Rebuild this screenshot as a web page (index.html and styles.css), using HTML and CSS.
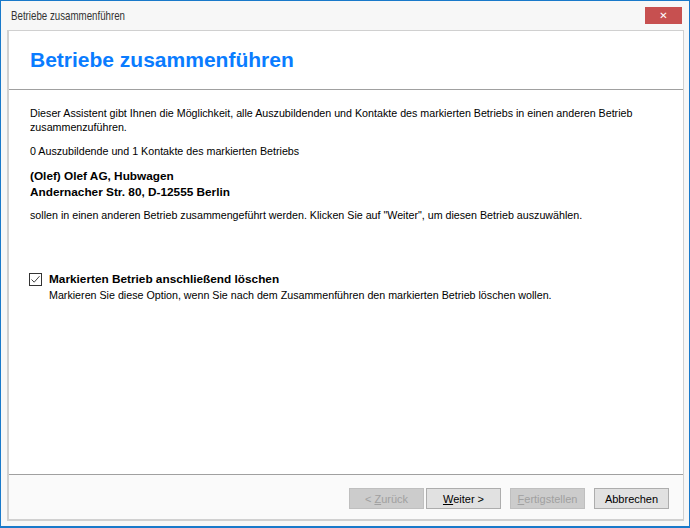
FILE: index.html
```html
<!DOCTYPE html>
<html lang="de">
<head>
    <meta charset="UTF-8">
    <title>Betriebe zusammenführen</title>
    <link rel="stylesheet" href="styles.css">
</head>
<body>
    <div class="window">
        <div class="titlebar">
            <span class="title">Betriebe zusammenführen</span>
            <button type="button" class="close-btn">&#x2715;</button>
        </div>
        <div class="panel">
            <div class="header">
                <h1>Betriebe zusammenführen</h1>
            </div>
            <div class="content">
                <p class="intro">Dieser Assistent gibt Ihnen die Möglichkeit, alle Auszubildenden und Kontakte des markierten Betriebs in einen anderen Betrieb zusammenzuführen.</p>
                <p class="count">0 Auszubildende und 1 Kontakte des markierten Betriebs</p>
                <p class="company">(Olef) Olef AG, Hubwagen<br>Andernacher Str. 80, D-12555 Berlin</p>
                <p class="hint">sollen in einen anderen Betrieb zusammengeführt werden. Klicken Sie auf "Weiter", um diesen Betrieb auszuwählen.</p>
                <div class="option">
                    <label class="check">
                        <span class="box">
                            <svg width="11" height="11" viewBox="0 0 11 11"><path d="M1.5 5.5 L4.2 8.2 L9.5 2.2" fill="none" stroke="#444" stroke-width="1"/></svg>
                        </span>
                        <span class="check-label">Markierten Betrieb anschließend löschen</span>
                    </label>
                    <p class="option-desc">Markieren Sie diese Option, wenn Sie nach dem Zusammenführen den markierten Betrieb löschen wollen.</p>
                </div>
            </div>
            <div class="footer">
                <button type="button" class="btn" disabled>&lt; <u>Z</u>urück</button>
                <button type="button" class="btn next"><u>W</u>eiter &gt;</button>
                <button type="button" class="btn" disabled><u>F</u>ertigstellen</button>
                <button type="button" class="btn">Abbrechen</button>
            </div>
        </div>
    </div>
</body>
</html>
```

FILE: styles.css
```css
body {
    margin: 0;
    padding: 0;
    font-family: "Liberation Sans", Arial, sans-serif;
    font-size: 10.7px;
    color: #000;
}
.window {
    width: 690px;
    height: 528px;
    box-sizing: border-box;
    border: 1px solid #1979ca;
    border-bottom-width: 2px;
    background: #f7f7f7;
    display: flex;
    flex-direction: column;
}
.titlebar {
    height: 29px;
    display: flex;
    align-items: flex-start;
    justify-content: space-between;
}
.title {
    display: inline-block;
    margin: 7px 0 0 10px;
    font-size: 13.5px;
    color: #333;
    transform: scaleX(0.72);
    transform-origin: left center;
}
.close-btn {
    width: 37px;
    height: 17px;
    margin: 6px 7px 0 0;
    border: none;
    background: #c75050;
    color: #fff;
    font-family: "DejaVu Sans", sans-serif;
    font-size: 10px;
    font-weight: bold;
    line-height: 17px;
    padding: 0;
}
.panel {
    flex: 1;
    margin: 0 5px 5px 6px;
    border: 1px solid #d0d0d0;
    border-bottom-width: 2px;
    border-left-width: 2px;
    background: #fff;
    display: flex;
    flex-direction: column;
}
.header {
    height: 58px;
    border-bottom: 1px solid #a0a0a0;
    display: flex;
    align-items: center;
}
h1 {
    margin: 0 0 0 21px;
    font-family: "Liberation Sans", Arial, sans-serif;
    font-size: 21px;
    font-weight: bold;
    color: #0a7cff;
}
.content {
    flex: 1;
    padding: 16px 20px 0 21px;
    line-height: 14px;
}
.content p {
    margin: 0;
}
.count {
    padding-top: 10px;
}
.company {
    padding-top: 10px;
    font-size: 11.8px;
    font-weight: bold;
    line-height: 16px;
}
.hint {
    padding-top: 8px;
}
.option {
    margin-top: 50px;
}
.check {
    display: flex;
    align-items: center;
    gap: 7px;
}
.box {
    width: 11px;
    height: 11px;
    margin-left: -1px;
    border: 1px solid #333;
    display: flex;
    align-items: center;
    justify-content: center;
}
.check-label {
    font-size: 11.8px;
    font-weight: bold;
}
.option-desc {
    padding: 2px 0 0 19px;
}
.footer {
    height: 45px;
    border-top: 1px solid #a0a0a0;
    background: #fafafa;
    display: flex;
    justify-content: flex-end;
    align-items: flex-start;
    padding: 13px 14px 0 0;
    box-sizing: border-box;
}
.btn {
    width: 75px;
    height: 21px;
    margin-left: 9px;
    padding: 0;
    border: 1px solid #adadad;
    background: #e1e1e1;
    font-family: "Liberation Sans", Arial, sans-serif;
    font-size: 11px;
    color: #000;
}
.btn.next {
    margin-left: 2px;
}
.btn:disabled {
    background: #cccccc;
    border-color: #bfbfbf;
    color: #a0a0a0;
}
```
